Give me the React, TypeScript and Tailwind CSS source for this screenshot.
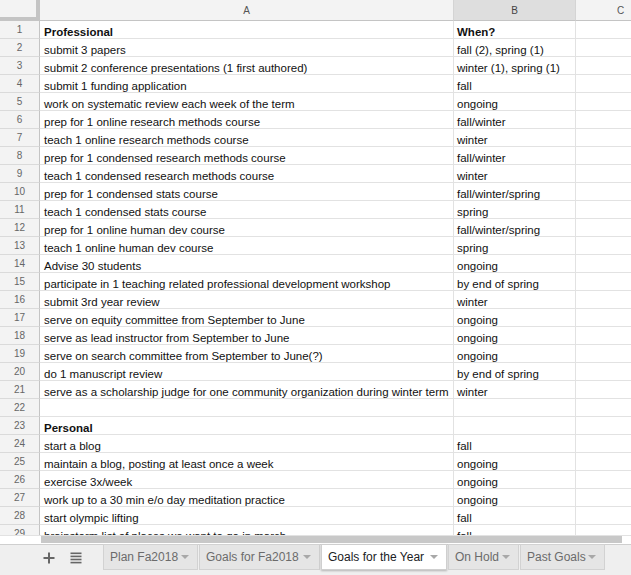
import React from "react";

const rows: [string, string, boolean?][] = [
  ["Professional", "When?", true],
  ["submit 3 papers", "fall (2), spring (1)"],
  ["submit 2 conference presentations (1 first authored)", "winter (1), spring (1)"],
  ["submit 1 funding application", "fall"],
  ["work on systematic review each week of the term", "ongoing"],
  ["prep for 1 online research methods course", "fall/winter"],
  ["teach 1 online research methods course", "winter"],
  ["prep for 1 condensed research methods course", "fall/winter"],
  ["teach 1 condensed research methods course", "winter"],
  ["prep for 1 condensed stats course", "fall/winter/spring"],
  ["teach 1 condensed stats course", "spring"],
  ["prep for 1 online human dev course", "fall/winter/spring"],
  ["teach 1 online human dev course", "spring"],
  ["Advise 30 students", "ongoing"],
  ["participate in 1 teaching related professional development workshop", "by end of spring"],
  ["submit 3rd year review", "winter"],
  ["serve on equity committee from September to June", "ongoing"],
  ["serve as lead instructor from September to June", "ongoing"],
  ["serve on search committee from September to June(?)", "ongoing"],
  ["do 1 manuscript review", "by end of spring"],
  ["serve as a scholarship judge for one community organization during winter term", "winter"],
  ["", ""],
  ["Personal", "", true],
  ["start a blog", "fall"],
  ["maintain a blog, posting at least once a week", "ongoing"],
  ["exercise 3x/week", "ongoing"],
  ["work up to a 30 min e/o day meditation practice", "ongoing"],
  ["start olympic lifting", "fall"],
  ["brainstorm list of places we want to go in march", "fall"],
];

const tabs: { label: string; w: string; active?: boolean }[] = [
  { label: "Plan Fa2018", w: "w-[95px]" },
  { label: "Goals for Fa2018", w: "w-[121px]" },
  { label: "Goals for the Year", w: "w-[126px]", active: true },
  { label: "On Hold", w: "w-[71px]" },
  { label: "Past Goals", w: "w-[85px]" },
];

function Caret() {
  return (
    <svg width="8" height="4" viewBox="0 0 8 4" className="shrink-0">
      <path d="M0 0 L8 0 L4 4 Z" fill="#a8a8a8" />
    </svg>
  );
}

export default function App() {
  return (
    <div
      className="w-[631px] h-[575px] overflow-hidden flex flex-col bg-white"
      style={{ fontFamily: '"Liberation Sans", Arial, sans-serif' }}
    >
      {/* Grid */}
      <div className="h-[535px] overflow-hidden flex flex-col shrink-0">
        {/* Header row */}
        <div className="flex h-[21px] shrink-0">
          <div className="w-[40px] h-[21px] bg-[#f3f3f3] border-r-4 border-b-4 border-[#c4c4c4] shrink-0" />
          <div className="w-[414px] h-[21px] bg-[#f3f3f3] border-r border-b border-r-[#d4d4d4] border-b-[#c4c4c4] flex items-center justify-center text-[10px] text-[#555] shrink-0">
            A
          </div>
          <div className="w-[122px] h-[21px] bg-[#dedede] border-r border-b border-r-[#d4d4d4] border-b-[#c4c4c4] flex items-center justify-center text-[10px] text-[#444] shrink-0">
            B
          </div>
          <div className="flex-1 h-[21px] bg-[#f3f3f3] border-b border-[#c4c4c4] flex items-center justify-center text-[10px] text-[#555] pl-[34px]">
            C
          </div>
        </div>
        {rows.map(([a, b, bold], i) => (
          <div key={i} className="flex h-[18px] shrink-0">
            <div className="w-[40px] h-[18px] bg-[#f3f3f3] border-r border-b border-r-[#c4c4c4] border-b-[#dadada] flex items-center justify-center text-[10px] text-[#666] shrink-0">
              {i + 1}
            </div>
            <div
              className={`w-[414px] h-[18px] border-r border-b border-[#e2e2e2] pl-[4px] pt-[4px] leading-[14px] text-[11.5px] text-[#111] whitespace-nowrap overflow-hidden shrink-0 ${bold ? "font-bold" : ""}`}
            >
              {a}
            </div>
            <div
              className={`w-[122px] h-[18px] border-r border-b border-[#e2e2e2] pl-[3px] pt-[4px] leading-[14px] text-[11.5px] text-[#111] whitespace-nowrap overflow-hidden shrink-0 ${bold ? "font-bold" : ""}`}
            >
              {b}
            </div>
            <div className="flex-1 h-[18px] border-b border-[#e2e2e2]" />
          </div>
        ))}
      </div>

      {/* Scrollbar strip */}
      <div className="h-[9px] flex shrink-0 bg-white border-t border-[#e2e2e2]">
        <div className="w-[41px] shrink-0" />
        <div className="w-[581px] h-[7px] bg-[#c8c8c8]" />
      </div>

      {/* Tab bar */}
      <div className="flex-1 bg-[#efefef] border-t border-[#cfcfcf] flex items-start">
        <div className="w-[103px] h-[26px] flex items-center shrink-0">
          <svg width="12" height="12" viewBox="0 0 12 12" className="ml-[43px]">
            <rect x="5" y="0.5" width="2" height="11" fill="#666" />
            <rect x="0.5" y="5" width="11" height="2" fill="#666" />
          </svg>
          <svg width="12" height="12" viewBox="0 0 12 12" className="ml-[15px]">
            <rect x="0.5" y="0.5" width="11" height="1.6" fill="#666" />
            <rect x="0.5" y="3.6" width="11" height="1.6" fill="#666" />
            <rect x="0.5" y="6.7" width="11" height="1.6" fill="#666" />
            <rect x="0.5" y="9.8" width="11" height="1.6" fill="#666" />
          </svg>
        </div>
        <div className="flex gap-[1px] -mt-[1px]">
          {tabs.map((t) => (
            <div
              key={t.label}
              className={`${t.w} h-[26px] flex items-center justify-between pl-[6px] pr-[8px] text-[12px] border shrink-0 ${
                t.active
                  ? "bg-white border-[#cfcfcf] text-[#202124] shadow-[0_1px_2px_rgba(0,0,0,0.25)] font-medium"
                  : "bg-[#e5e5e5] border-[#d2d2d2] text-[#6b6b6b]"
              }`}
            >
              <span className="whitespace-nowrap">{t.label}</span>
              <Caret />
            </div>
          ))}
        </div>
      </div>
    </div>
  );
}
